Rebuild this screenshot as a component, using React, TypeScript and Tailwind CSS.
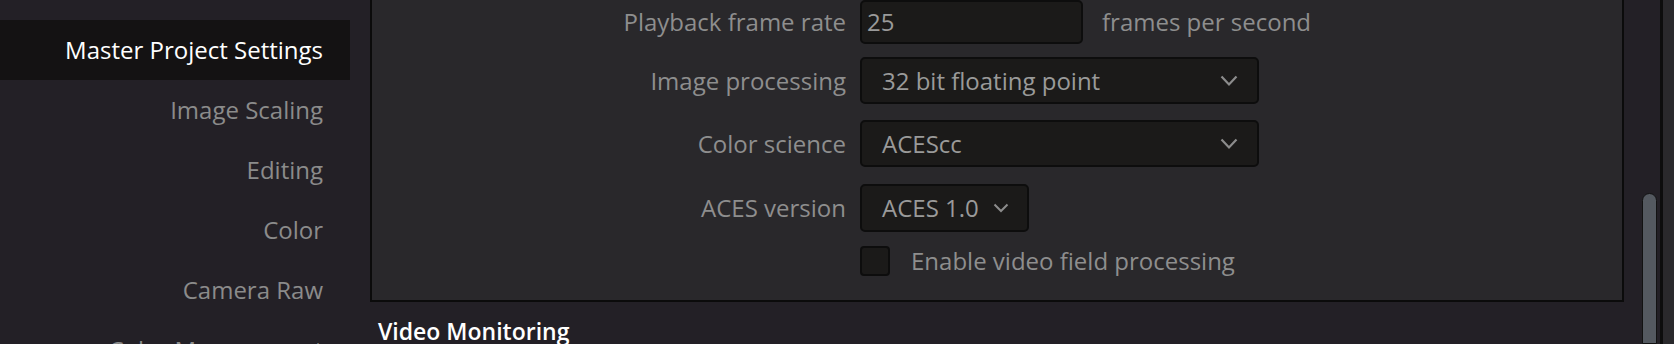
import React from 'react';

const NAV_ITEMS = [
  'Presets',
  'Master Project Settings',
  'Image Scaling',
  'Editing',
  'Color',
  'Camera Raw',
  'Color Management',
];

function Chevron({ small }: { small?: boolean }) {
  return small ? (
    <svg width="16" height="10" viewBox="0 0 16 10" className="shrink-0">
      <polyline points="1.5,1.5 8,8 14.5,1.5" fill="none" stroke="#8c8c8c" strokeWidth="2" />
    </svg>
  ) : (
    <svg width="18" height="12" viewBox="0 0 18 12" className="shrink-0">
      <polyline points="1.5,1.5 9,9.5 16.5,1.5" fill="none" stroke="#8c8c8c" strokeWidth="2.2" />
    </svg>
  );
}

function Row({ label, children, className }: { label: string; children: React.ReactNode; className?: string }) {
  return (
    <div className={`flex items-center ${className ?? ''}`}>
      <div className="w-[474px] shrink-0 text-right text-[24px] text-[#8e8e8e]">{label}</div>
      <div className="ml-[14px] flex items-center">{children}</div>
    </div>
  );
}

export default function App() {
  return (
    <div className="flex h-[344px] w-[1674px] overflow-hidden bg-[#232026] font-['Open_Sans','Liberation_Sans',sans-serif] leading-none antialiased">
      {/* sidebar */}
      <aside className="-mt-[40px] flex w-[350px] shrink-0 flex-col">
        {NAV_ITEMS.map((item) => {
          const active = item === 'Master Project Settings';
          return (
            <div
              key={item}
              className={
                active
                  ? 'flex h-[60px] shrink-0 items-center justify-end bg-[#141213] pr-[27px] text-[24px] text-white'
                  : 'flex h-[60px] shrink-0 items-center justify-end pr-[27px] text-[24px] text-[#8b8b8b]'
              }
            >
              {item}
            </div>
          );
        })}
      </aside>

      {/* settings content */}
      <main className="ml-[20px] flex w-[1254px] shrink-0 flex-col">
        <section className="flex flex-col border-x-2 border-b-2 border-[#0b0b0b] bg-[#29282b] pb-[24px]">
          <Row label="Playback frame rate" className="h-[44px]">
            <div className="flex h-[44px] w-[223px] items-center rounded-[5px] border-2 border-[#0d0d0d] bg-[#1b1a19] pl-[5px] text-[24px] text-[#9a9a9a]">
              25
            </div>
            <span className="ml-[19px] text-[24px] text-[#8e8e8e]">frames per second</span>
          </Row>

          <Row label="Image processing" className="mt-[13px] h-[47px]">
            <div className="flex h-[47px] w-[399px] items-center justify-between rounded-[5px] border-2 border-[#0d0d0d] bg-[#1b1a19] pl-[20px] pr-[19px] text-[24px] text-[#9a9a9a]">
              <span>32 bit floating point</span>
              <Chevron />
            </div>
          </Row>

          <Row label="Color science" className="mt-[16px] h-[47px]">
            <div className="flex h-[47px] w-[399px] items-center justify-between rounded-[5px] border-2 border-[#0d0d0d] bg-[#1b1a19] pl-[20px] pr-[19px] text-[24px] text-[#9a9a9a]">
              <span>ACEScc</span>
              <Chevron />
            </div>
          </Row>

          <Row label="ACES version" className="mt-[17px] h-[48px]">
            <div className="flex h-[48px] w-[169px] items-center gap-[14px] rounded-[5px] border-2 border-[#0d0d0d] bg-[#1b1a19] pl-[20px] text-[24px] text-[#9a9a9a]">
              <span>ACES 1.0</span>
              <Chevron small />
            </div>
          </Row>

          <div className="mt-[14px] flex h-[30px] items-center pl-[488px]">
            <div className="h-[30px] w-[30px] rounded-[4px] border-2 border-[#0d0d0d] bg-[#1b1a19]" />
            <span className="ml-[21px] text-[24px] text-[#8e8e8e]">Enable video field processing</span>
          </div>
        </section>

        <h2 className="mt-[13px] pl-[8px] text-[23px] font-semibold leading-[32px] text-white">Video Monitoring</h2>
      </main>

      {/* scrollbar */}
      <div className="flex w-[36px] shrink-0 flex-col pl-[18px] pt-[193px]">
        <div className="w-[15px] flex-1 rounded-t-full border border-[#121212] bg-[#545960]" />
      </div>
      <div className="w-[3px] shrink-0 bg-[#0d0d0d]" />
      <div className="flex-1 bg-[#2a292c]" />
    </div>
  );
}
